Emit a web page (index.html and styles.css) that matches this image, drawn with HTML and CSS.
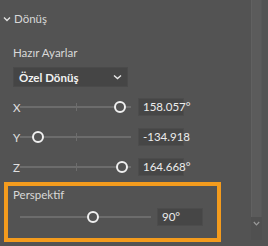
FILE: index.html
```html
<!DOCTYPE html>
<html lang="tr">
<head>
<meta charset="utf-8">
<link rel="stylesheet" href="styles.css">
</head>
<body>
<div class="panel">
  <div class="content">
    <div class="header">
      <svg class="chev" width="8" height="6" viewBox="0 0 8 6"><path d="M1 1.5 L4 4.5 L7 1.5" fill="none" stroke="#e0e0e0" stroke-width="1.4"/></svg>
      <span>Dönüş</span>
    </div>
    <div class="label presets">Hazır Ayarlar</div>
    <div class="dropdown">
      <span>Özel Dönüş</span>
      <svg width="9" height="6" viewBox="0 0 9 6"><path d="M1 1.5 L4.5 4.5 L8 1.5" fill="none" stroke="#e8e8e8" stroke-width="1.4"/></svg>
    </div>
    <div class="row">
      <span class="axis">X</span>
      <div class="slider"><div class="tick"></div><div class="thumb" style="left:90%"></div></div>
      <div class="num">158.057°</div>
    </div>
    <div class="row">
      <span class="axis">Y</span>
      <div class="slider"><div class="tick"></div><div class="thumb" style="left:16%"></div></div>
      <div class="num">-134.918</div>
    </div>
    <div class="row">
      <span class="axis">Z</span>
      <div class="slider"><div class="tick"></div><div class="thumb" style="left:92%"></div></div>
      <div class="num">164.668°</div>
    </div>
    <div class="highlight">
      <div class="label">Perspektif</div>
      <div class="row prow">
        <div class="slider wide"><div class="thumb" style="left:56%"></div></div>
        <div class="num">90°</div>
      </div>
    </div>
  </div>
  <div class="scrollbar">
    <div class="track"></div>
    <div class="down">
      <svg width="7" height="5" viewBox="0 0 7 5"><path d="M0.8 1 L3.5 3.8 L6.2 1" fill="none" stroke="#9a9a9a" stroke-width="1.2"/></svg>
    </div>
  </div>
</div>
</body>
</html>
```
FILE: styles.css
```css
html, body {
  margin: 0;
  padding: 0;
  background: #535353;
}
body {
  width: 268px;
  height: 246px;
  overflow: hidden;
  font-family: "Lato", "Noto Sans", sans-serif;
  font-size: 11.5px;
  color: #d6d6d6;
}
.panel {
  display: flex;
  height: 246px;
}
.content {
  flex: 1;
  display: flex;
  flex-direction: column;
}
.header {
  display: flex;
  align-items: center;
  gap: 3px;
  height: 14px;
  margin-top: 12px;
  padding-left: 3px;
  line-height: 14px;
  color: #d8d8d8;
}
.label {
  line-height: 14px;
  height: 14px;
  color: #d8d8d8;
}
.presets {
  margin-top: 20px;
  padding-left: 13px;
}
.dropdown {
  margin-top: 7px;
  margin-left: 13px;
  width: 115px;
  height: 20px;
  box-sizing: border-box;
  background: #454545;
  border: 1px solid #4a4a4a;
  display: flex;
  align-items: center;
  justify-content: space-between;
  padding: 0 5px 0 5px;
  color: #f2f2f2;
  font-weight: 700;
}
.row {
  display: flex;
  align-items: center;
  height: 18px;
  padding-left: 13px;
  margin-top: 12px;
}
.dropdown + .row {
  margin-top: 11px;
}
.axis {
  width: 7px;
  color: #e0e0e0;
}
.slider {
  position: relative;
  width: 111px;
  height: 2px;
  background: #6c6c6c;
  margin-right: 7px;
}
.tick {
  position: absolute;
  left: 50%;
  top: -3px;
  width: 1px;
  height: 8px;
  background: #6c6c6c;
}
.thumb {
  position: absolute;
  top: 1px;
  width: 8px;
  height: 8px;
  margin: -6px 0 0 -6px;
  border: 2px solid #f0f0f0;
  border-radius: 50%;
  background: #535353;
}
.num {
  width: 46px;
  height: 18px;
  box-sizing: border-box;
  background: #464646;
  border: 1px solid #4c4c4c;
  padding-left: 4px;
  line-height: 16px;
  color: #ececec;
}
.highlight {
  margin: 6px 0 0 4px;
  width: 217px;
  height: 60px;
  box-sizing: border-box;
  border: 4px solid #f39b1d;
  padding: 2px 0 0 5px;
}
.prow {
  margin-top: 6px;
  padding-left: 7px;
}
.slider.wide {
  width: 131px;
  margin-right: 6px;
}
.scrollbar {
  width: 11px;
  margin-right: 6px;
  display: flex;
  flex-direction: column;
}
.track {
  height: 217px;
  box-sizing: border-box;
  background: #5b5b5b;
  border-left: 1px solid #616161;
  border-right: 1px solid #575757;
}
.down {
  height: 23px;
  display: flex;
  justify-content: center;
  padding-top: 4px;
  box-sizing: border-box;
  background: #505050;
}
```
